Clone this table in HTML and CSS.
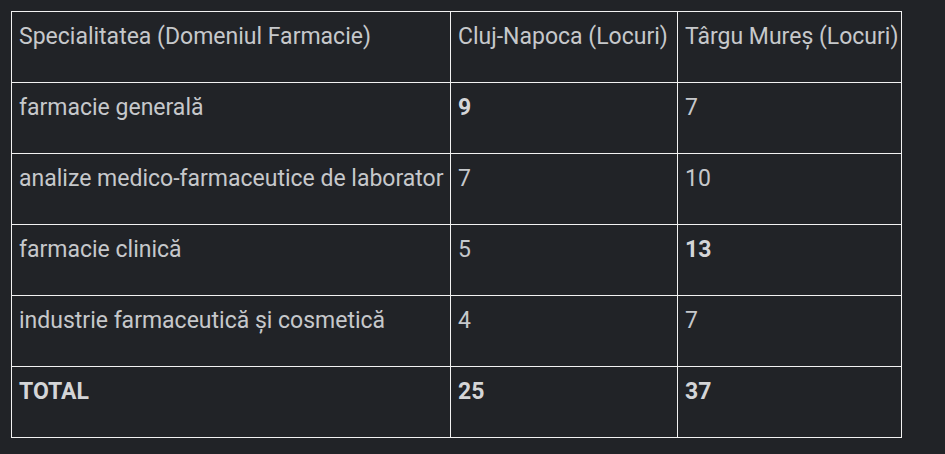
FILE: index.html
```html
<!DOCTYPE html>
<html lang="ro">
<head>
<meta charset="utf-8">
<link rel="stylesheet" href="styles.css">
</head>
<body>
<table class="data">
  <colgroup>
    <col class="c1">
    <col class="c2">
    <col class="c3">
  </colgroup>
  <tr>
    <td>Specialitatea (Domeniul Farmacie)</td>
    <td>Cluj-Napoca (Locuri)</td>
    <td>Târgu Mureș (Locuri)</td>
  </tr>
  <tr>
    <td>farmacie generală</td>
    <td><b>9</b></td>
    <td>7</td>
  </tr>
  <tr>
    <td>analize medico-farmaceutice de laborator</td>
    <td>7</td>
    <td>10</td>
  </tr>
  <tr>
    <td>farmacie clinică</td>
    <td>5</td>
    <td><b>13</b></td>
  </tr>
  <tr>
    <td>industrie farmaceutică și cosmetică</td>
    <td>4</td>
    <td>7</td>
  </tr>
  <tr>
    <td><b>TOTAL</b></td>
    <td><b>25</b></td>
    <td><b>37</b></td>
  </tr>
</table>
</body>
</html>
```
FILE: styles.css
```css
html, body {
  margin: 0;
  background: #212327;
}
body {
  padding: 11px 0 0 11px;
  font-family: Roboto, "Liberation Sans", sans-serif;
  font-size: 23px;
  color: #c6c8cb;
}
.data {
  border-collapse: collapse;
  table-layout: fixed;
  width: 890px;
}
.data td {
  border: 1px solid #f2f2f2;
  height: 71px;
  box-sizing: border-box;
  padding: 12px 4px 0 7px;
  vertical-align: top;
  line-height: 26px;
  white-space: nowrap;
  overflow: visible;
}
.data .c1 { width: 439px; }
.data .c2 { width: 227px; }
.data .c3 { width: 224px; }
.data b {
  font-weight: 700;
  color: #d4d5d7;
}
```
